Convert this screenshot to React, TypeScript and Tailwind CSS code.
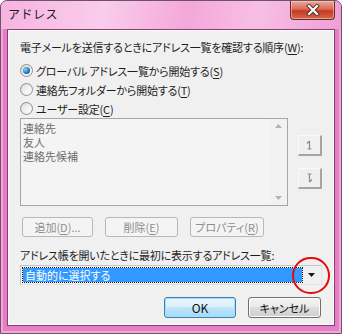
import { ReactNode } from 'react'

const font = "font-['Noto_Sans_CJK_JP','Noto_Sans_CJK_SC',sans-serif] [font-feature-settings:'palt']"

const Key = ({ k }: { k: string }) => (
  <span>
    (<span className="underline underline-offset-2">{k}</span>)
  </span>
)

const Radio = ({ checked, children }: { checked?: boolean; children: ReactNode }) => (
  <div className="flex h-[19px] items-center gap-[3px]">
    <span className="flex h-[13px] w-[13px] items-center justify-center rounded-full border border-[#8e8f8f] bg-gradient-to-br from-[#d6d6d6] to-[#fbfbfb]">
      <span className="flex h-[9px] w-[9px] items-center justify-center rounded-full bg-gradient-to-br from-[#e2e2e2] to-[#ffffff]">
        {checked && (
          <span className="h-[7px] w-[7px] rounded-full bg-[radial-gradient(circle_at_35%_35%,#8fd2f5,#1f6fb8_60%,#0d4a8a)]" />
        )}
      </span>
    </span>
    <span className="whitespace-nowrap text-[11px] leading-[16px] tracking-[-0.2px] text-[#1e1e1e]">{children}</span>
  </div>
)

const SmallBtn = ({ down }: { down?: boolean }) => (
  <div className="flex h-[21px] w-[24px] items-center justify-center border-t border-l border-t-[#fafafa] border-l-[#fafafa] border-r-2 border-b-2 border-r-[#a5a5a5] border-b-[#a5a5a5]">
    <svg width="7" height="10" viewBox="0 0 7 10" className={down ? 'rotate-180' : ''}>
      <path d="M3.5 1 V9 M1.5 9 H5.5" stroke="#8a8a8a" strokeWidth="1.2" fill="none" />
      <path d="M1 3.5 L3.5 0.8" stroke="#8a8a8a" strokeWidth="1.2" />
    </svg>
  </div>
)

const DisBtn = ({ w, children }: { w: string; children: ReactNode }) => (
  <div className={`${w} flex h-[20px] items-center justify-center whitespace-nowrap rounded-[3px] border border-[#b5b9bc] bg-[#f4f4f4] text-[11px] leading-[16px] text-[#8d8d8d]`}>
    {children}
  </div>
)

export default function App() {
  return (
    <div className={`${font} relative h-[334px] w-[342px] overflow-hidden rounded-t-[7px] border border-[#6e5368] bg-[#e67ec6] px-[6px] pb-[7px] shadow-[inset_0_0_0_2px_#f2a6dc]`}>
      {/* title bar */}
      <div className="-mx-[6px] flex h-[28px] items-start justify-between bg-[linear-gradient(100deg,#f6b3df_0%,#f9cdeb_30%,#f4a7da_55%,#f7bfe4_75%,#ef9fd6_100%)] pl-[7px] pr-[6px]">
        <span className="mt-[5px] text-[12px] leading-[16px] tracking-[0.5px] text-[#1a1a2a] [font-feature-settings:normal]">アドレス</span>
        <div className="flex h-[19px] w-[45px] items-center justify-center rounded-b-[4px] border border-t-0 border-[#6d2a22] bg-[linear-gradient(#ebaa9c_0%,#db6b55_45%,#c53a22_55%,#d26a4f_100%)] shadow-[inset_0_0_0_1px_rgba(255,220,210,0.5)]">
          <svg width="14" height="12" viewBox="0 0 14 12">
            <path d="M3 2 L11 10 M11 2 L3 10" stroke="#5a2a25" strokeWidth="4" strokeLinecap="square" />
            <path d="M3 2 L11 10 M11 2 L3 10" stroke="#ffffff" strokeWidth="2.2" strokeLinecap="square" />
          </svg>
        </div>
      </div>

      {/* client area */}
      <div className="flex h-[297px] flex-col border border-[#8e3b74] bg-[#f0f0f0] px-[12px] shadow-[inset_0_0_0_1px_#ffffff]">
        <div className="mt-[9px] whitespace-nowrap text-[11px] leading-[16px] tracking-[-0.2px] text-[#1e1e1e]">
          電子メールを送信するときにアドレス一覧を確認する順序<Key k="W" />:
        </div>

        <div className="mt-[6px] flex flex-col">
          <Radio checked>
            グローバル アドレス一覧から開始する<Key k="S" />
          </Radio>
          <Radio>
            連絡先フォルダーから開始する<Key k="T" />
          </Radio>
          <Radio>
            ユーザー設定<Key k="C" />
          </Radio>
        </div>

        <div className="flex">
          <div className="flex h-[88px] w-[268px] border border-[#a3a7ad] bg-[#f4f4f4]">
            <div className="flex flex-1 flex-col pl-[2px] pt-[2px] text-[11px] leading-[14px] text-[#6d6d6d]">
              <div className="h-[14px]">連絡先</div>
              <div className="h-[14px]">友人</div>
              <div className="h-[14px]">連絡先候補</div>
            </div>
            <div className="flex w-[17px] flex-col items-center justify-between bg-[#f2f2f2] py-[5px]">
              <svg width="7" height="4" viewBox="0 0 7 4">
                <path d="M0 4 L3.5 0 L7 4 Z" fill="#b4b4b4" />
              </svg>
              <svg width="7" height="4" viewBox="0 0 7 4">
                <path d="M0 0 L3.5 4 L7 0 Z" fill="#b4b4b4" />
              </svg>
            </div>
          </div>
          <div className="ml-[10px] flex flex-col gap-[12px] pt-[17px]">
            <SmallBtn />
            <SmallBtn down />
          </div>
        </div>

        <div className="ml-[2px] mt-[11px] flex gap-[12px]">
          <DisBtn w="w-[71px]">
            追加<Key k="D" />...
          </DisBtn>
          <DisBtn w="w-[73px]">
            削除<Key k="E" />
          </DisBtn>
          <DisBtn w="w-[74px]">
            プロパティ<Key k="R" />
          </DisBtn>
        </div>

        <div className="mt-[10px] whitespace-nowrap text-[11px] leading-[16px] tracking-[-0.2px] text-[#1e1e1e]">
          アドレス帳を開いたときに最初に表示するアドレス一覧:
        </div>

        <div className="mt-[2px] flex h-[20px] w-[302px] items-center border border-[#c2c4c8] border-b-[#e3e3e3] border-r-[#e3e3e3] bg-[#f0f0f0] pl-[2px]">
          <div className="flex h-[14px] w-[279px] items-center bg-[#3399ff] pl-[2px] text-[11px] leading-[14px] text-white outline-1 outline-dotted outline-[#1b1b1b]">
            自動的に選択する
          </div>
          <div className="flex flex-1 items-center justify-center">
            <svg width="7" height="4" viewBox="0 0 7 4">
              <path d="M0 0 L7 0 L3.5 4 Z" fill="#1a1a1a" />
            </svg>
          </div>
        </div>

        <div className="mr-[1px] mt-[12px] flex justify-end gap-[12px]">
          <div className="flex h-[21px] w-[72px] items-center justify-center rounded-[3px] border border-[#3c7fb1] bg-[linear-gradient(#eaf6fd_0%,#d9f0fc_45%,#bee6fd_50%,#a7d9f5_100%)] text-[12px] leading-[16px] text-[#111] shadow-[inset_0_0_0_1px_#a8e0fb]">
            OK
          </div>
          <div className="flex h-[21px] w-[73px] items-center justify-center rounded-[3px] border border-[#707070] bg-[linear-gradient(#f2f2f2_0%,#ebebeb_45%,#dddddd_50%,#cfcfcf_100%)] text-[11px] leading-[16px] text-[#111] shadow-[inset_0_0_0_1px_#fcfcfc]">
            キャンセル
          </div>
        </div>
      </div>

      {/* red annotation circle */}
      <div className="absolute left-[291px] top-[256px] h-[37px] w-[38px] rounded-full border-2 border-[#e30b0b]" />
    </div>
  )
}
